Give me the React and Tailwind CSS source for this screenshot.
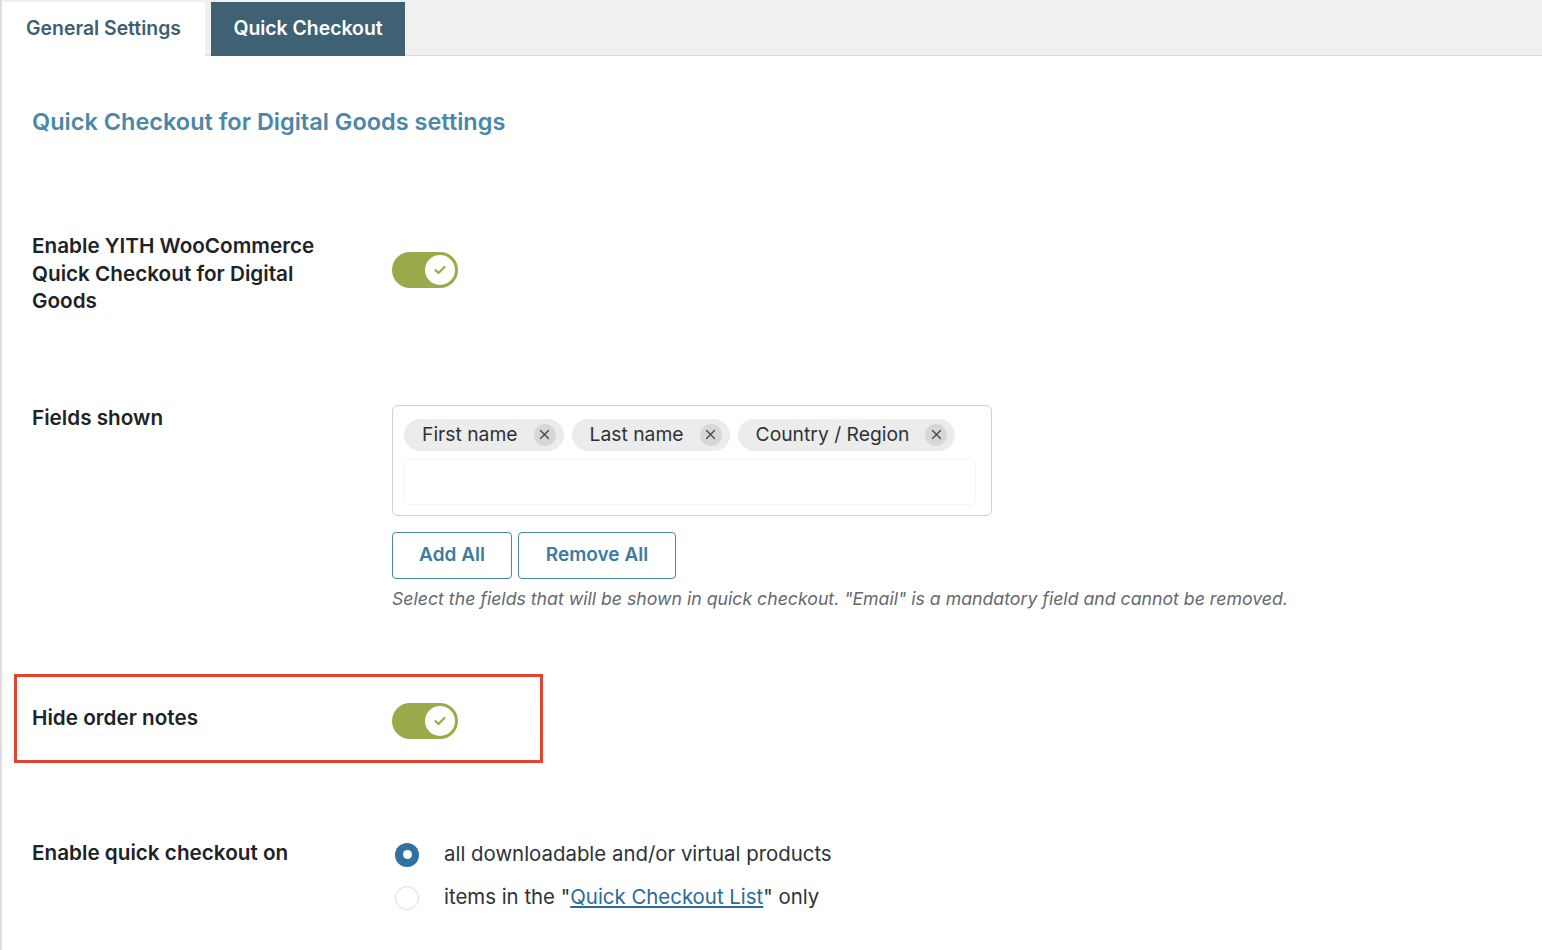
import React, { useState } from "react";

const Toggle = ({ on = true }) => (
  <div className="relative w-[66px] h-[36px] rounded-full bg-[#9aaa4a] flex items-center justify-end pr-[3px]">
    <div className="w-[30px] h-[30px] rounded-full bg-white flex items-center justify-center">
      <svg width="12" height="10" viewBox="0 0 12 10" fill="none">
        <path d="M1.5 5.2 L4.5 8 L10.5 2" stroke="#9aaa4a" strokeWidth="2.2" strokeLinecap="round" strokeLinejoin="round" />
      </svg>
    </div>
  </div>
);

const Chip = ({ label }) => (
  <div className="flex items-center h-[32px] rounded-full bg-[#ececec] pl-[18px] pr-[8px] gap-[16px]">
    <span className="text-[19.3px] text-[#2c3338]">{label}</span>
    <span className="w-[22px] h-[22px] rounded-full bg-[#d7d7d7] flex items-center justify-center">
      <svg width="11" height="11" viewBox="0 0 11 11">
        <path d="M1.5 1.5 L9.5 9.5 M9.5 1.5 L1.5 9.5" stroke="#444" strokeWidth="1.3" strokeLinecap="round" />
      </svg>
    </span>
  </div>
);

export default function App() {
  const [mode, setMode] = useState(0);

  return (
    <div className="min-h-screen bg-white border-l-2 border-[#dedede] font-['Inter','Noto_Sans',sans-serif]">
      {/* Tabs */}
      <div className="h-[56px] bg-[#f0f0f0] border-b border-[#dcdcdc] flex items-end pt-[2px] gap-[6px]">
        <div className="w-[203px] h-[54px] bg-white flex items-center justify-center text-[19.4px] font-semibold text-[#3e5f72] -mb-px">
          General Settings
        </div>
        <div className="w-[194px] h-[54px] bg-[#3f6174] flex items-center justify-center text-[19.4px] font-semibold text-white -mb-px">
          Quick Checkout
        </div>
      </div>

      <div className="pl-[30px]">
        <h1 className="mt-[50px] text-[23.5px] leading-[32px] font-semibold text-[#4a87a8]">
          Quick Checkout for Digital Goods settings
        </h1>

        {/* Enable */}
        <div className="flex mt-[94px]">
          <div className="w-[360px] shrink-0">
            <div className="w-[300px] text-[20.7px] leading-[27.5px] font-semibold text-[#1d2327]">
              Enable YITH WooCommerce Quick Checkout for Digital Goods
            </div>
          </div>
          <div className="pt-[20px]">
            <Toggle />
          </div>
        </div>

        {/* Fields shown */}
        <div className="flex mt-[89px]">
          <div className="w-[360px] shrink-0 text-[20.7px] leading-[28px] font-semibold text-[#1d2327]">
            Fields shown
          </div>
          <div>
            <div className="w-[600px] h-[111px] border border-[#cfcfcf] rounded-[6px] px-[11px] pt-[13px] mt-px">
              <div className="flex gap-[8px]">
                <Chip label="First name" />
                <Chip label="Last name" />
                <Chip label="Country / Region" />
              </div>
              <div className="mt-[7px] h-[47px] w-[572px] border border-[#f4f4f4] rounded-[6px]" />
            </div>
            <div className="flex gap-[6px] mt-[16px]">
              <button className="w-[120px] h-[47px] border border-[#4a86a6] rounded-[4px] text-[19px] font-semibold text-[#3d7ba0]">
                Add All
              </button>
              <button className="w-[158px] h-[47px] border border-[#4a86a6] rounded-[4px] text-[19px] font-semibold text-[#3d7ba0]">
                Remove All
              </button>
            </div>
            <p className="mt-[8px] text-[17.7px] leading-[24px] italic text-[#646970] whitespace-nowrap">
              Select the fields that will be shown in quick checkout. "Email" is a mandatory field and cannot be removed.
            </p>
          </div>
        </div>

        {/* Hide order notes */}
        <div className="mt-[63px] -ml-[18px] w-[529px] h-[89px] border-[3px] border-[#e0452f] flex pl-[15px] pt-[27px]">
          <div className="w-[360px] shrink-0 text-[20.7px] leading-[28px] font-semibold text-[#1d2327]">
            Hide order notes
          </div>
          <div className="-mt-[1px]">
            <Toggle />
          </div>
        </div>

        {/* Enable quick checkout on */}
        <div className="flex mt-[76px]">
          <div className="w-[360px] shrink-0 text-[20.7px] leading-[28px] font-semibold text-[#1d2327]">
            Enable quick checkout on
          </div>
          <div className="flex flex-col gap-[19px] pt-[4px]">
            {[0, 1].map((i) => (
              <label key={i} className="flex items-center gap-[25px] cursor-pointer h-[24px] pl-[3px]" onClick={() => setMode(i)}>
                {mode === i ? (
                  <span className="w-[24px] h-[24px] rounded-full bg-[#2f72a0] flex items-center justify-center">
                    <span className="w-[9px] h-[9px] rounded-full bg-white" />
                  </span>
                ) : (
                  <span className="w-[24px] h-[24px] rounded-full border border-[#dcdcdc] bg-white" />
                )}
                <span className="text-[20.4px] text-[#2c3338]">
                  {i === 0 ? (
                    "all downloadable and/or virtual products"
                  ) : (
                    <>
                      items in the "<a href="#" className="text-[#2a6a9b] underline underline-offset-2">Quick Checkout List</a>" only
                    </>
                  )}
                </span>
              </label>
            ))}
          </div>
        </div>
      </div>
    </div>
  );
}
